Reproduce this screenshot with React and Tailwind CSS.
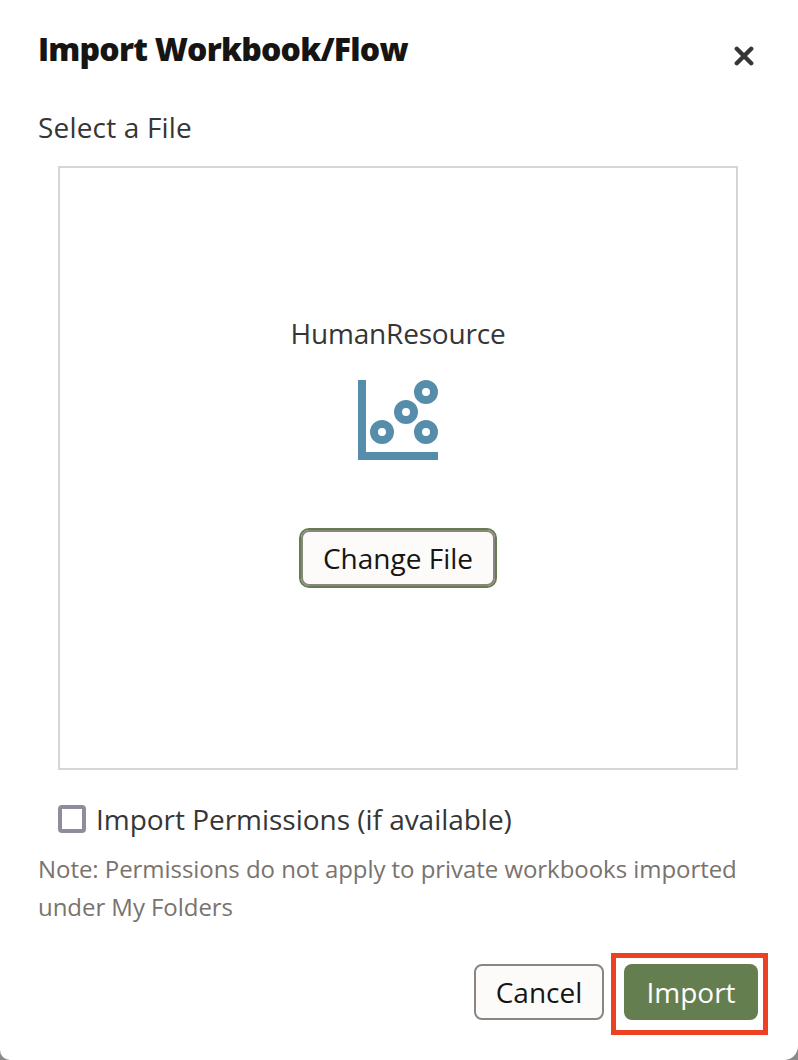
function ScatterIcon() {
  return (
    <svg className="mt-[27px] block h-20 w-20" viewBox="0 0 80 80" fill="none" stroke="#568dab" strokeWidth="8">
      <path d="M4 0V76H80" />
      <circle cx="24" cy="52" r="8" />
      <circle cx="48" cy="32" r="8" />
      <circle cx="68" cy="12" r="8" />
      <circle cx="68" cy="52" r="8" />
    </svg>
  );
}

export default function App() {
  return (
    <div className="h-[1060px] w-[798px] overflow-hidden bg-[#8a8a8a] font-['Open_Sans',sans-serif] text-[28px] leading-10 whitespace-nowrap text-[#363636]">
      <div className="flex h-full flex-col rounded-br-[14px] rounded-bl-[10px] bg-white pt-[29px] pr-[40px] pl-[38px]">
        <header className="flex h-[78px] items-start justify-between">
          <h1 className="text-[32px] font-extrabold tracking-[-0.79px] text-[#161513]">
            <span>Import Workbook/Flow</span>
          </h1>
          <button aria-label="Close" className="mt-[17px] mr-1">
            <svg className="block h-5 w-5" viewBox="0 0 20 20" stroke="#363636" strokeWidth="4.4" strokeLinecap="round">
              <path d="M2.8 2.8 17.2 17.2M17.2 2.8 2.8 17.2" />
            </svg>
          </button>
        </header>
        <p className="h-[59px] tracking-[0.18px]"><span>Select a File</span></p>
        <section className="ml-5 flex h-[604px] w-[680px] shrink-0 flex-col items-center border-2 border-[#d5d5d5] pt-[145px]">
          <p className="tracking-[-0.2px]"><span>HumanResource</span></p>
          <ScatterIcon />
          <button className="mt-[68px] h-[60px] w-[198px] rounded-[10px] border-2 border-[#657e50] bg-[#fcfbfa] text-[#161513]">
            <span className="flex h-full w-full items-center justify-center rounded-[8px] border-2 border-[#8b8580]">
              <span>Change File</span>
            </span>
          </button>
        </section>
        <label className="mt-[29px] ml-5 flex h-10 items-center">
          <span className="h-7 w-7 rounded-[4px] border-4 border-[#8f8d9b]" />
          <span className="ml-2.5 tracking-[-0.03px]">Import Permissions (if available)</span>
        </label>
        <p className="mt-[11px] text-[24px] leading-[38px] tracking-[-0.05px] text-[#79736e]">
          <span>Note: Permissions do not apply to private workbooks imported</span>
          <br />
          <span>under My Folders</span>
        </p>
        <footer className="mt-[27px] flex items-start justify-end">
          <button className="mt-[11px] mr-[7px] flex h-14 w-[130px] items-center justify-center rounded-lg border-2 border-[#8b8580] bg-[#fcfbfa] text-[#161513]">
            <span>Cancel</span>
          </button>
          <div className="-mr-[10px] flex h-[82px] w-[157px] items-start border-[5px] border-[#ee4023] pt-[6px] pl-2">
            <button className="flex h-14 w-[134px] items-center justify-center rounded-lg bg-[#657e50] text-white">
              <span>Import</span>
            </button>
          </div>
        </footer>
      </div>
    </div>
  );
}
